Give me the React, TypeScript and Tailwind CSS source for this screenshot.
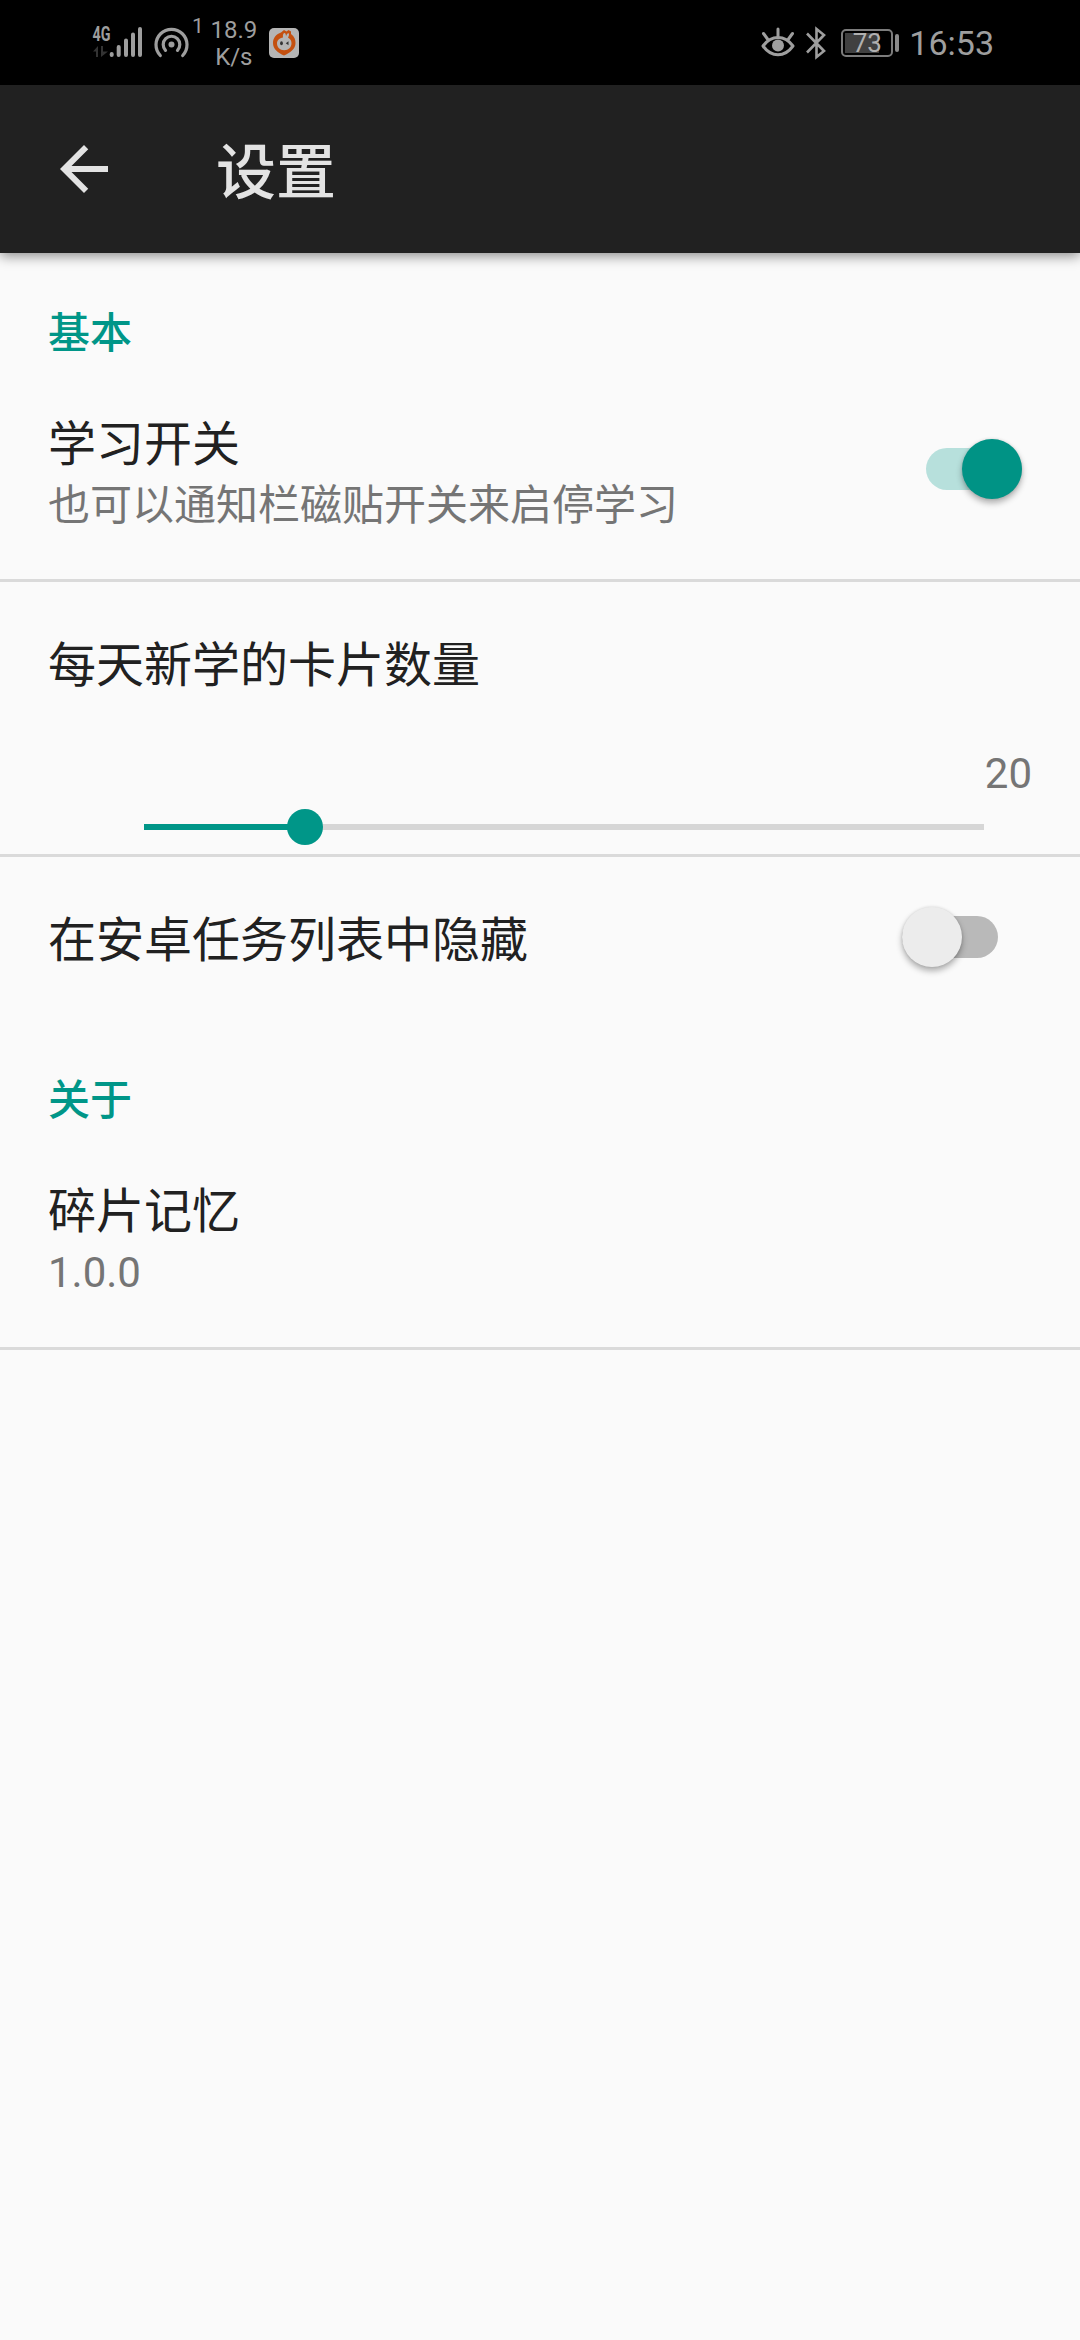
import * as React from "react";
import { useState } from "react";

// Status bar icons

function SignalIcon() {
  return (
    <svg width="52" height="38" viewBox="0 -5 52 38" className="text-[#9e9e9e]">
      <text
        x="0.5"
        y="15.5"
        fontSize="19.5"
        fontWeight="700"
        fontFamily="Roboto, sans-serif"
        textLength="18"
        lengthAdjust="spacingAndGlyphs"
        fill="currentColor"
      >
        4G
      </text>
      <path
        d="M1 26.500 6 21v11H4v-5.500zM9 21h2v5.500h5L9 32z"
        fill="#333333"
      />
      <g stroke="currentColor" strokeWidth="4" strokeLinecap="round">
        <path d="M19.700 29v1M26.700 22v8M34 15.500V30M41 9.500V30M48 4v26" />
      </g>
    </svg>
  );
}

function HotspotIcon() {
  return (
    <svg
      width="36"
      height="34"
      viewBox="0 0 36 34"
      fill="none"
      stroke="#9e9e9e"
      strokeWidth="3.2"
      strokeLinecap="round"
    >
      <path d="M6.300 29.500a15.500 15.500 0 1 1 22.400 0" />
      <path d="M11.500 24.300a8.300 8.300 0 1 1 12 0" />
      <circle cx="17.500" cy="18.500" r="3" fill="#9e9e9e" stroke="none" />
    </svg>
  );
}

function AppBadgeIcon() {
  return (
    <svg width="30" height="30" viewBox="0 0 30 30">
      <rect width="30" height="30" rx="5" fill="#b5b5b5" />
      <path
        d="M12 4.500 15 2l2.500 1.500L19.500 2l2.500 1.500V6c3.500 2.500 4.500 5.500 4.500 9 0 6-5.500 10-11.500 12.500C9 25 4 21 4 15 4 9.500 7.500 6 12 4.500z"
        fill="#c4500f"
      />
      <path
        d="M14 9.500C13.500 7 14.500 5 15.500 5s1.500 2 1.500 3.500C17.500 6.500 18.500 5 19.500 5.300s.5 2.700-.5 4.200c2.500 1.300 3.500 3.500 3.500 5.800 0 4-3 7-7.300 7S8 19.300 8 15.300c0-3 2.500-5.300 6-5.800z"
        fill="#b5b5b5"
      />
      <ellipse cx="12.500" cy="15.300" rx="1.400" ry="2" fill="#333333" />
      <path d="M19.500 13.300 16.800 15.300l2.700 2z" fill="#333333" />
    </svg>
  );
}

function EyeIcon() {
  return (
    <svg
      width="34"
      height="32"
      viewBox="0 0 34 32"
      fill="none"
      stroke="#9e9e9e"
      strokeWidth="3"
      strokeLinecap="round"
      strokeLinejoin="round"
    >
      <path d="M2 19C6 13.500 11 10.500 17 10.500s11 3 15 8.500c-4 5.500-9 8.800-15 8.800S6 24.500 2 19z" />
      <path d="M17 2v7M2.500 6.500 6.500 12M31.500 6.500 27.500 12" />
      <circle cx="17" cy="18.500" r="6" fill="#9e9e9e" stroke="none" />
    </svg>
  );
}

function BluetoothIcon() {
  return (
    <svg
      width="22"
      height="34"
      viewBox="0 0 22 34"
      fill="none"
      stroke="#9e9e9e"
      strokeWidth="2.6"
    >
      <path d="M2 7.500 19 25l-7.500 6V3L19 9 2 26.500" />
    </svg>
  );
}

function Battery({ level }: { level: number }) {
  return (
    <div className="flex items-center gap-[2px]">
      <div className="relative flex h-[28px] w-[52px] items-center justify-center rounded-[5px] border-2 border-[#7c7c7c]">
        <div
          className="absolute top-[2px] bottom-[2px] left-[2px] bg-[#404040]"
          style={{ width: `${(level / 100) * 46}px` }}
        />
        <span className="relative text-[26px] leading-none text-[#b0b0b0]">
          {level}
        </span>
      </div>
      <div className="h-[18px] w-[4px] rounded-full bg-[#8a8a8a]" />
    </div>
  );
}

function StatusBar() {
  return (
    <div className="flex h-[85px] items-start justify-between bg-black pr-[86px] pl-[92px] text-[#9e9e9e]">
      <div className="flex items-start">
        <div className="mt-[20px]">
          <SignalIcon />
        </div>
        <div className="mt-[26px] ml-[10px]">
          <HotspotIcon />
        </div>
        <span className="mt-[14px] ml-[2px] text-[21px] leading-[24px]">1</span>
        <div className="mt-[17px] ml-[6px] w-[48px] text-center text-[24px] leading-[27px]">
          <div>18.9</div>
          <div>K/s</div>
        </div>
        <div className="mt-[28px] ml-[11px]">
          <AppBadgeIcon />
        </div>
      </div>
      <div className="flex h-[86px] items-center">
        <EyeIcon />
        <div className="ml-[10px]">
          <BluetoothIcon />
        </div>
        <div className="ml-[14px]">
          <Battery level={73} />
        </div>
        <span className="ml-[10px] text-[34px] leading-[40px]">16:53</span>
      </div>
    </div>
  );
}

function AppBar({ title }: { title: string }) {
  return (
    <header className="relative flex h-[168px] items-center bg-[#212121] pl-[60px] text-[#e3e3e3] shadow-[0_3px_12px_rgba(0,0,0,0.45)]">
      <button type="button" aria-label="返回">
        <svg width="48" height="48" viewBox="4 4 16 16" fill="currentColor">
          <path d="M20 11H7.830l5.590-5.590L12 4l-8 8 8 8 1.410-1.410L7.830 13H20v-2z" />
        </svg>
      </button>
      <h1 className="mt-[10px] ml-[108px] text-[60px] leading-[72px] font-medium">
        {title}
      </h1>
    </header>
  );
}

// Preferences

function SectionTitle({ children }: { children: React.ReactNode }) {
  return (
    <h2 className="px-12 text-[42px] leading-[50px] font-medium text-[#009688]">
      {children}
    </h2>
  );
}

function Label({ title, summary }: { title: string; summary?: string }) {
  return (
    <div>
      <p className="text-[48px] leading-[56px] text-[#212121]">{title}</p>
      {summary ? (
        <p className="mt-[8px] text-[42px] leading-[50px] text-[#757575]">
          {summary}
        </p>
      ) : null}
    </div>
  );
}

function Switch({
  label,
  defaultChecked = false,
}: {
  label: string;
  defaultChecked?: boolean;
}) {
  const [checked, setChecked] = useState(defaultChecked);

  return (
    <button
      type="button"
      role="switch"
      aria-label={label}
      aria-checked={checked}
      onClick={() => setChecked(!checked)}
      className={
        "relative flex h-[60px] w-[96px] items-center " +
        (checked ? "justify-end" : "justify-start")
      }
    >
      <span
        className={
          "absolute inset-x-0 top-[9px] h-[42px] rounded-full " +
          (checked ? "bg-[#b7e0dc]" : "bg-[#b9b9b9]")
        }
      />
      <span
        className={
          "relative h-[60px] w-[60px] rounded-full shadow-[0_4px_6px_rgba(0,0,0,0.3),0_0_3px_rgba(0,0,0,0.12)] " +
          (checked ? "bg-[#009385]" : "bg-[#ececec]")
        }
      />
    </button>
  );
}

function Slider({ value, left }: { value: number; left: number }) {
  return (
    <div className="px-12">
      <p className="text-right text-[42px] leading-[50px] text-[#757575]">
        {value}
      </p>
      <div className="mt-[10px] mr-12 ml-24 flex h-[36px] items-center">
        <div className="h-[6px] bg-[#009688]" style={{ width: left }} />
        <div className="relative -mx-[18px] h-[36px] w-[36px] shrink-0 rounded-full bg-[#009688]" />
        <div className="h-[6px] flex-1 bg-[#d6d6d6]" />
      </div>
    </div>
  );
}

export default function App() {
  return (
    <div className="min-h-[2340px] w-[1080px] bg-[#fafafa] font-['Roboto','Noto_Sans_CJK_SC',sans-serif]">
      <StatusBar />
      <AppBar title="设置" />

      <section className="pt-[56px]">
        <SectionTitle>基本</SectionTitle>
        <div className="flex h-[223px] items-start justify-between border-b-[3px] border-[#dadada] pt-[58px] pr-[58px] pl-12">
          <Label
            title="学习开关"
            summary="也可以通知栏磁贴开关来启停学习"
          />
          <div className="mt-[22px]">
            <Switch label="学习开关" defaultChecked />
          </div>
        </div>
        <div className="h-[275px] border-b-[3px] border-[#dadada] pt-[56px]">
          <div className="mb-[55px] px-12">
            <Label title="每天新学的卡片数量" />
          </div>
          <Slider value={20} left={161} />
        </div>
        <div className="flex h-[160px] items-start justify-between pt-[50px] pr-[82px] pl-12">
          <div className="pt-[6px]">
            <Label title="在安卓任务列表中隐藏" />
          </div>
          <Switch label="在安卓任务列表中隐藏" />
        </div>
      </section>

      <section className="pt-[59px]">
        <SectionTitle>关于</SectionTitle>
        <div className="h-[224px] border-b-[3px] border-[#dadada] px-12 pt-[58px]">
          <Label title="碎片记忆" summary="1.0.0" />
        </div>
      </section>
    </div>
  );
}
